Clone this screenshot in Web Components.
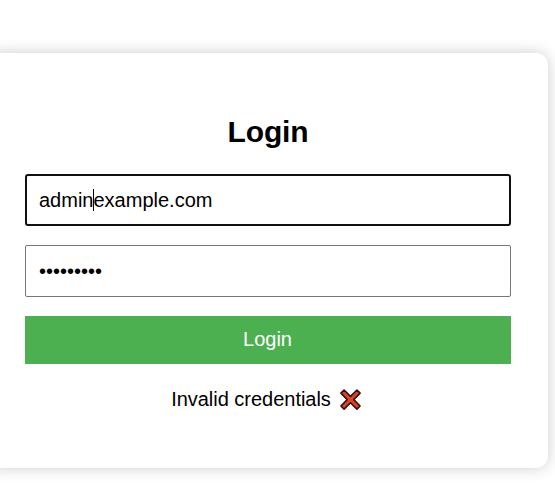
<!DOCTYPE html>
<html lang="en">
<head>
<meta charset="utf-8">
<title>Login</title>
<style>
  html, body { margin: 0; height: 100%; overflow: hidden; background: #fff; }
  body { font-family: "Liberation Sans", Arial, sans-serif; color: #000; }
</style>
</head>
<body>
<login-card>
  <span slot="title">Login</span>
  <text-field active><span>admin</span><text-caret></text-caret><span>example.com</span></text-field>
  <text-field class="password">•••••••••</text-field>
  <submit-button>Login</submit-button>
  <status-message>Invalid credentials</status-message>
</login-card>
<script>
  const define = (name, html) => customElements.define(name, class extends HTMLElement {
    constructor() {
      super();
      this.attachShadow({ mode: 'open' }).innerHTML = html;
    }
  });

  define('login-card', `
    <style>
      :host { display: flex; flex-direction: column; box-sizing: border-box; width: 560px; height: 415px;
        margin: 53px 0 0 -12px; padding: 62px 37px 0; border-radius: 12px; background: #fff;
        box-shadow: 0 0 15px rgba(0,0,0,.2); }
      h2 { margin: 0 0 25px; font-size: 30px; line-height: 34px; font-weight: bold; text-align: center; letter-spacing: -.15px; }
      .body { display: flex; flex-direction: column; gap: 19px; }
    </style>
    <h2><slot name="title"></slot></h2>
    <div class="body"><slot></slot></div>`);

  define('text-field', `
    <style>
      :host { display: flex; align-items: center; box-sizing: border-box; height: 52px; padding: 0 13px;
        border: 1px solid #767676; border-radius: 2px; background: #fff; font-size: 20px; line-height: 24px; white-space: nowrap; }
      :host([active]) { border: 2px solid #101010; border-radius: 3px; padding: 0 12px; }
    </style>
    <slot></slot>`);

  define('text-caret', `
    <style>:host { display: block; width: 1px; height: 22px; margin: 0 -1px 0 0; background: #000; }</style>`);

  define('submit-button', `
    <style>
      :host { display: flex; align-items: center; justify-content: center; box-sizing: border-box; height: 48px;
        padding: 0 1px 2px 0; background: #4caf50; color: #fff; font-size: 20px; line-height: 24px; }
    </style>
    <slot></slot>`);

  define('status-message', `
    <style>
      :host { display: flex; align-items: center; justify-content: center; height: 24px; margin-top: 4px;
        font-size: 20px; line-height: 24px; padding-right: 3px; letter-spacing: -.02px; }
      svg { margin-left: 8px; width: 23px; height: 23px; }
    </style>
    <slot></slot>
    <svg viewBox="0 0 24 24"><path d="M5.3 2.1 L12 8.8 L18.7 2.1 L22 5.4 L15.4 12.1 L22 18.8 L18.7 22.1 L12 15.4 L5.3 22.1 L2 18.8 L8.6 12.1 L2 5.4 Z" fill="#dd4329" stroke="#35110c" stroke-width="1.7" stroke-linejoin="round"/></svg>`);
</script>
</body>
</html>
